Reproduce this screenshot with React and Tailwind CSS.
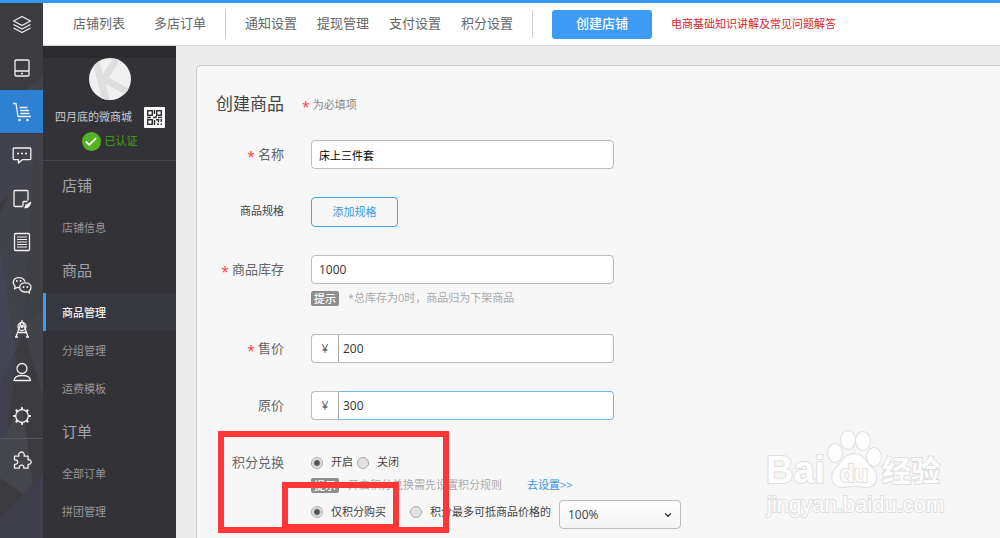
import { Check, ChevronDown } from 'lucide-react';

const railIcons = [
    {
        name: '店铺概览',
        art: <path d="M1.5 6 10 1.5 18.5 6 10 10.5zM1.5 9.5 10 14l8.5-4.5M1.5 13 10 17.5 18.5 13" />,
    },
    {
        name: '设备',
        art: <path d="M4 2h12a1 1 0 0 1 1 1v14a1 1 0 0 1-1 1H4a1 1 0 0 1-1-1V3a1 1 0 0 1 1-1zM3 13h14M9 15.5h2" />,
    },
    {
        name: '商城',
        active: true,
        art: (
            <>
                <path d="M1 1.5h3l2 13h13M7.5 5.5h8M8 8.5h9M8.5 11.5h9" />
                <path d="M7.5 18h.1M15.5 18h.1" strokeWidth="2.5" strokeLinecap="round" />
            </>
        ),
    },
    {
        name: '消息',
        art: (
            <>
                <path d="M2 3h16a.8.8 0 0 1 .8.8v10a.8.8 0 0 1-.8.8h-7.5L6.5 18v-3.4H2a.8.8 0 0 1-.8-.8v-10A.8.8 0 0 1 2 3z" />
                <path d="M6 8.5h.1M10 8.5h.1M14 8.5h.1" strokeWidth="2" strokeLinecap="round" />
            </>
        ),
    },
    {
        name: '图文',
        art: (
            <>
                <path d="M10.5 17.5H3a1 1 0 0 1-1-1v-14a1 1 0 0 1 1-1h12a1 1 0 0 1 1 1v9" />
                <path d="M11 17.5v-4c0-.6.4-1 1-1h3.5M12.5 18.5c3 .5 5.5-1.5 6-5l-3.5 2.5-1.5-.5" />
                <path d="M13 17.5c2 0 4-1.2 4.700-3" strokeWidth="2" />
            </>
        ),
    },
    {
        name: '列表',
        art: (
            <>
                <rect x="2.500" y="1.500" width="15" height="17" rx="1" />
                <path d="M5 5h10M5 7.500h10M5 10h10M5 12.500h10M5 15h10" strokeWidth="1" />
            </>
        ),
    },
    {
        name: '微信',
        art: (
            <>
                <path d="M8 12.500c-.8.100-1.800 0-2.600-.2L2.500 14l.7-2.800C.2 8.600.400 3.200 6.300 2.600c3.200-.300 6 1.300 6.500 4" />
                <path d="M13.300 7.800c3.200 0 5.700 2 5.700 4.600 0 1.500-.7 2.600-1.800 3.500l.3 2.100-2.200-1.200c-4.100.8-7.700-1.200-7.700-4.400 0-2.600 2.500-4.600 5.700-4.600z" />
                <path d="M4.800 6h.1M8.500 6h.1M11.500 12h.1M15.300 12h.1" strokeWidth="1.800" strokeLinecap="round" />
            </>
        ),
    },
    {
        name: '设计',
        art: (
            <>
                <circle cx="10" cy="7.500" r="4" />
                <path d="M10 1v3M9 3.500 4 18M11 3.500 16 18M3 18h3M14 18h3M5.500 13.500h9" />
                <circle cx="10" cy="7.500" r="1" fill="currentColor" />
            </>
        ),
    },
    {
        name: '会员',
        art: (
            <>
                <circle cx="10" cy="6.500" r="5" />
                <path d="M2 18.500h16.500c-.3-3-3.500-5-8.200-5S2.300 15.500 2 18.500z" />
            </>
        ),
    },
    {
        name: '设置',
        art: (
            <>
                <circle cx="10" cy="10" r="6.300" />
                <path d="M10 1.200v2.500M10 16.300v2.500M1.200 10h2.500M16.300 10h2.500M3.800 3.800l1.700 1.700M14.500 14.500l1.700 1.700M3.800 16.200l1.700-1.700M14.500 5.500l1.700-1.700" strokeWidth="2" />
            </>
        ),
    },
    {
        name: '插件',
        art: (
            <path d="M2.500 6.200h4.400c-.8-2.200.6-4.200 2.600-4.200s3.400 2 2.600 4.200h4v3.600c1.700-.400 3.100.800 3.100 2.200s-1.400 2.700-3.100 2.300v3.900h-4.300c.4-1.800-.7-3.100-2.200-3.100s-2.700 1.300-2.200 3.100H2.500v-3.900c2 .300 3.200-.800 3.200-2.200s-1.200-2.500-3.200-2.200z" />
        ),
    },
];

const menu = [
    { title: '店铺', items: ['店铺信息'] },
    { title: '商品', items: ['商品管理', '分组管理', '运费模板'] },
    { title: '订单', items: ['全部订单', '拼团管理'] },
];

function Rail() {
    return (
        <nav className="relative w-[43px] shrink-0 bg-[#3c3c40] text-[#f2f2f2]">
            <svg className="absolute inset-0 h-full w-full" viewBox="0 0 43 535" preserveAspectRatio="none" aria-hidden="true">
                <path d="M0 210 43 132v260L24 330 0 380z" fill="#42424a" />
                <path d="M43 74 24 88h19zM0 132h43v30L0 200z" fill="#42424d" />
                <path d="M34 150 43 165v140L24 320z" fill="#3f4043" />
                <path d="M0 240 16 360 0 480z" fill="#46465a" opacity=".5" />
                <path d="M22 400 35 500 0 475V440z" fill="#45454c" />
                <path d="M0 515 43 470v65H0z" fill="#3f3f4c" />
            </svg>
            <ul className="relative grid h-[478px] auto-rows-fr">
                {railIcons.map((icon, i) => (
                    <li key={icon.name} className={i === 10 ? 'border-t border-[#55555c]' : ''}>
                        <a
                            href="#"
                            aria-label={icon.name}
                            className={`flex h-full items-center justify-center ${icon.active ? 'bg-[#2d80d2]' : ''}`}
                        >
                            <svg className="h-5 w-5" viewBox="0 0 20 20" fill="none" stroke="currentColor" strokeWidth="1.3" strokeLinejoin="round">
                                {icon.art}
                            </svg>
                        </a>
                    </li>
                ))}
            </ul>
        </nav>
    );
}

function Header() {
    const link = 'text-[13px] text-[#666] whitespace-nowrap';
    return (
        <header className="flex h-[43px] items-center gap-[19px] border-b border-[#d4d4d4] bg-white pl-[30px]">
            <nav className="flex gap-[29px]">
                <a href="#" className={link}>店铺列表</a>
                <a href="#" className={link}>多店订单</a>
            </nav>
            <div className="h-7 w-px bg-[#ccc]" />
            <nav className="flex gap-5">
                <a href="#" className={link}>通知设置</a>
                <a href="#" className={link}>提现管理</a>
                <a href="#" className={link}>支付设置</a>
                <a href="#" className={link}>积分设置</a>
            </nav>
            <div className="h-7 w-px bg-[#ccc]" />
            <button type="button" className="h-[29px] w-[100px] shrink-0 rounded-[3px] bg-[#3d9bf6] text-[13px] font-medium text-white">
                创建店铺
            </button>
            <a href="#" className="whitespace-nowrap text-[11px] text-[#d9252b]">电商基础知识讲解及常见问题解答</a>
        </header>
    );
}

function QrCode() {
    return (
        <svg className="h-[21px] w-[21px]" viewBox="0 0 21 21" role="img" aria-label="二维码">
            <rect width="21" height="21" rx="1" fill="#fff" />
            <g fill="none" stroke="#333" strokeWidth="1.500">
                <path d="M3.700 3.700h4.600v4.600H3.700zM12.700 3.700h4.600v4.600h-4.600zM3.700 12.700h4.600v4.600H3.700z" />
                <path d="M10.500 3v4M3 10.500h4M9 10.500h3v-1.500M14 10.500h4M10.500 13v5M12 12.700h2.500v2.500M17.300 12v3M13 17.300h2M16.500 17.300h1.500" />
            </g>
        </svg>
    );
}

function Sidebar() {
    return (
        <aside className="w-[133px] shrink-0 bg-[#333337] pb-1">
            <div className="h-3 bg-[#2b2b30]" />
            <div className="flex flex-col items-center border-b border-[#46464f] pb-[9px]">
                <svg className="h-[42px] w-[42px]" viewBox="0 0 42 42" aria-hidden="true">
                    <defs>
                        <clipPath id="avatar">
                            <circle cx="21" cy="21" r="21" />
                        </clipPath>
                    </defs>
                    <g clipPath="url(#avatar)">
                        <rect width="42" height="42" fill="#f0f0f0" />
                        <path d="M7 4 17 42M28 0 15 21 42 36" fill="none" stroke="#dedede" strokeWidth="7" />
                    </g>
                </svg>
                <div className="mt-[7px] flex w-full items-center justify-between pl-3 pr-[11px]">
                    <span className="text-[11px] text-[#ccc]">四月底的微商城</span>
                    <QrCode />
                </div>
                <div className="mt-1 flex items-center gap-1 text-[11px] text-[#42a60c]">
                    <span className="flex h-[19px] w-[19px] items-center justify-center rounded-full bg-[#57b226] text-white">
                        <Check size={14} strokeWidth={3} />
                    </span>
                    已认证
                </div>
            </div>
            {menu.map((group) => (
                <section key={group.title}>
                    <h2 className="flex h-[47px] items-center pl-[19px] pt-px text-[15px] text-[#a3a3a8]">{group.title}</h2>
                    <ul>
                        {group.items.map((item) => (
                            <li key={item}>
                                <a
                                    href="#"
                                    className={`flex h-[38px] items-center border-l-[3px] pl-4 pt-[2px] text-[11px] ${
                                        item === '商品管理'
                                            ? 'border-[#3d9bf6] bg-[#373740] font-medium text-[#f0f0f0]'
                                            : 'border-transparent text-[#96969b]'
                                    }`}
                                >
                                    {item}
                                </a>
                            </li>
                        ))}
                    </ul>
                </section>
            ))}
        </aside>
    );
}

function Star() {
    return <span className="h-3 text-[14px] leading-4 text-[#ff3b3b]">*</span>;
}

function Row({ label, htmlFor, required, small, children }) {
    return (
        <div className="flex gap-[27px]">
            <label
                htmlFor={htmlFor}
                className={`flex h-[29px] w-[68px] shrink-0 items-center justify-end gap-[3px] whitespace-nowrap ${
                    small ? 'text-[11px] text-[#444]' : 'text-[13px] text-[#666]'
                }`}
            >
                {required && <Star />}
                {label}
            </label>
            <div className="min-w-0 flex-1">{children}</div>
        </div>
    );
}

function Tip({ children }) {
    return (
        <div className="flex h-4 items-center gap-[9px] whitespace-nowrap text-[11px] text-[#aaa]">
            <span className="w-[28px] rounded-[2px] bg-[#8e8e8e] text-center font-medium leading-[15px] text-white">提示</span>
            {children}
        </div>
    );
}

function PriceInput({ id, value, active }) {
    return (
        <div className="flex h-[29px] max-w-[303px]">
            <span className="flex w-[27px] items-center justify-center rounded-l-[4px] border border-r-0 border-[#bbb] bg-white text-[12px] text-[#666]">
                ¥
            </span>
            <input
                id={id}
                defaultValue={value}
                className={`min-w-0 flex-1 rounded-r-[4px] border border-l-[#aaa] bg-white px-1 text-[12px] text-[#333] outline-none ${
                    active ? 'border-[#6fbbec]' : 'border-[#bbb]'
                }`}
            />
        </div>
    );
}

function Radio({ name, label, checked }) {
    return (
        <label className="flex items-center gap-2 whitespace-nowrap text-[11px] text-[#444]">
            <input
                type="radio"
                name={name}
                defaultChecked={checked}
                className="h-3 w-3 appearance-none rounded-full border border-[#aaa] bg-[#e2e2e2] checked:bg-[radial-gradient(#505050_2px,#e8e8e8_4px)]"
            />
            {label}
        </label>
    );
}

function Watermark() {
    return (
        <svg
            className="pointer-events-none absolute right-[50px] top-[380px] h-[92px] w-[186px]"
            viewBox="0 0 186 92"
            fill="#fdfdfd"
            stroke="#e0e0e0"
            strokeWidth="2"
            paintOrder="stroke"
            aria-hidden="true"
        >
            <ellipse cx="71" cy="27" rx="7" ry="9" />
            <ellipse cx="84" cy="14" rx="7" ry="9" />
            <ellipse cx="99" cy="15" rx="7" ry="9" />
            <ellipse cx="110" cy="31" rx="7" ry="9" />
            <path d="M90 28c-10 0-12 9-18 14-6 6-5 19 6 19 5 0 7-1 12-1s8 1 13 1c10 0 12-12 5-19-6-5-8-14-18-14z" />
            <text x="2" y="57" fontSize="38" fontWeight="700" fontFamily="Liberation Sans, sans-serif">Bai</text>
            <text x="76" y="56" fontSize="23" fontWeight="700" fontFamily="Liberation Sans, sans-serif">du</text>
            <text x="118" y="56" fontSize="29" fontWeight="700" fontFamily="Noto Sans CJK SC, sans-serif">经验</text>
            <text x="3" y="86" fontSize="22" fontFamily="Liberation Sans, sans-serif">jingyan.baidu.com</text>
        </svg>
    );
}

function ProductForm() {
    return (
        <form className="flex-1 rounded-tl-[5px] border-l border-t border-[#ccc] bg-[#f7f7f7] pb-2 pl-[19px] pt-6">
            <div className="flex h-7 items-center gap-[18px]">
                <h1 className="text-[17px] text-[#444]">创建商品</h1>
                <span className="flex items-center gap-[3px] pt-[2px] text-[11px] text-[#888]">
                    <Star />
                    为必填项
                </span>
            </div>
            <div className="mt-[22px] flex flex-col gap-7">
                <Row label="名称" htmlFor="name" required>
                    <input
                        id="name"
                        defaultValue="床上三件套"
                        className="block h-[29px] w-full max-w-[303px] rounded-[4px] border border-[#bbb] bg-white px-[7px] text-[11px] text-black outline-none"
                    />
                </Row>
                <Row label="商品规格" htmlFor="spec" small>
                    <button
                        id="spec"
                        type="button"
                        className="block h-[30px] w-[87px] rounded-[4px] border border-[#4aa3e2] text-[11px] text-[#3c97e0]"
                    >
                        添加规格
                    </button>
                </Row>
                <Row label="商品库存" htmlFor="stock" required>
                    <input
                        id="stock"
                        defaultValue="1000"
                        className="mb-[6px] block h-[29px] w-full max-w-[303px] rounded-[4px] border border-[#bbb] bg-white px-[7px] text-[12px] text-[#333] outline-none"
                    />
                    <Tip>*总库存为0时，商品归为下架商品</Tip>
                </Row>
                <Row label="售价" htmlFor="price" required>
                    <PriceInput id="price" value="200" />
                </Row>
                <Row label="原价" htmlFor="original">
                    <PriceInput id="original" value="300" active />
                </Row>
                <Row label="积分兑换">
                    <div className="flex h-[29px] items-center gap-1">
                        <Radio name="points" label="开启" checked />
                        <Radio name="points" label="关闭" />
                    </div>
                    <Tip>
                        开启积分兑换需先设置积分规则
                        <a href="#" className="ml-4 text-[#3595e6]">去设置&gt;&gt;</a>
                    </Tip>
                    <div className="mt-[7px] flex items-start">
                        <div className="flex h-6 gap-6">
                            <Radio name="mode" label="仅积分购买" checked />
                            <Radio name="mode" label="积分最多可抵商品价格的" />
                        </div>
                        <div className="relative ml-2 w-[122px]">
                            <select
                                aria-label="抵扣比例"
                                className="h-[29px] w-full appearance-none rounded-[4px] border border-[#bbb] bg-linear-to-b from-white to-[#f3f3f3] px-2 text-[12px] text-[#444]"
                            >
                                <option>100%</option>
                            </select>
                            <ChevronDown size={10} strokeWidth={3} className="pointer-events-none absolute right-2 top-[10px] text-[#333]" />
                        </div>
                    </div>
                </Row>
            </div>
        </form>
    );
}

export default function App() {
    return (
        <div className="flex min-h-screen flex-col border-t-[3px] border-[#3796f0] font-['Open_Sans','Noto_Sans_CJK_SC',sans-serif]">
            <div className="flex flex-1">
                <Rail />
                <div className="flex min-w-0 flex-1 flex-col">
                    <Header />
                    <div className="flex flex-1">
                        <Sidebar />
                        <main className="relative flex min-w-0 flex-1 flex-col overflow-hidden bg-[#ececec] pl-5 pt-[19px]">
                            <ProductForm />
                            <Watermark />
                            {/* highlight frames around the points settings */}
                            <div className="pointer-events-none absolute left-[42px] top-[385px] h-[102px] w-[231px] border-[6px] border-[#fd3636]" />
                            <div className="pointer-events-none absolute left-[106px] top-[436px] h-[48px] w-[117px] border-[6px] border-[#fd3636]" />
                        </main>
                    </div>
                </div>
            </div>
        </div>
    );
}
